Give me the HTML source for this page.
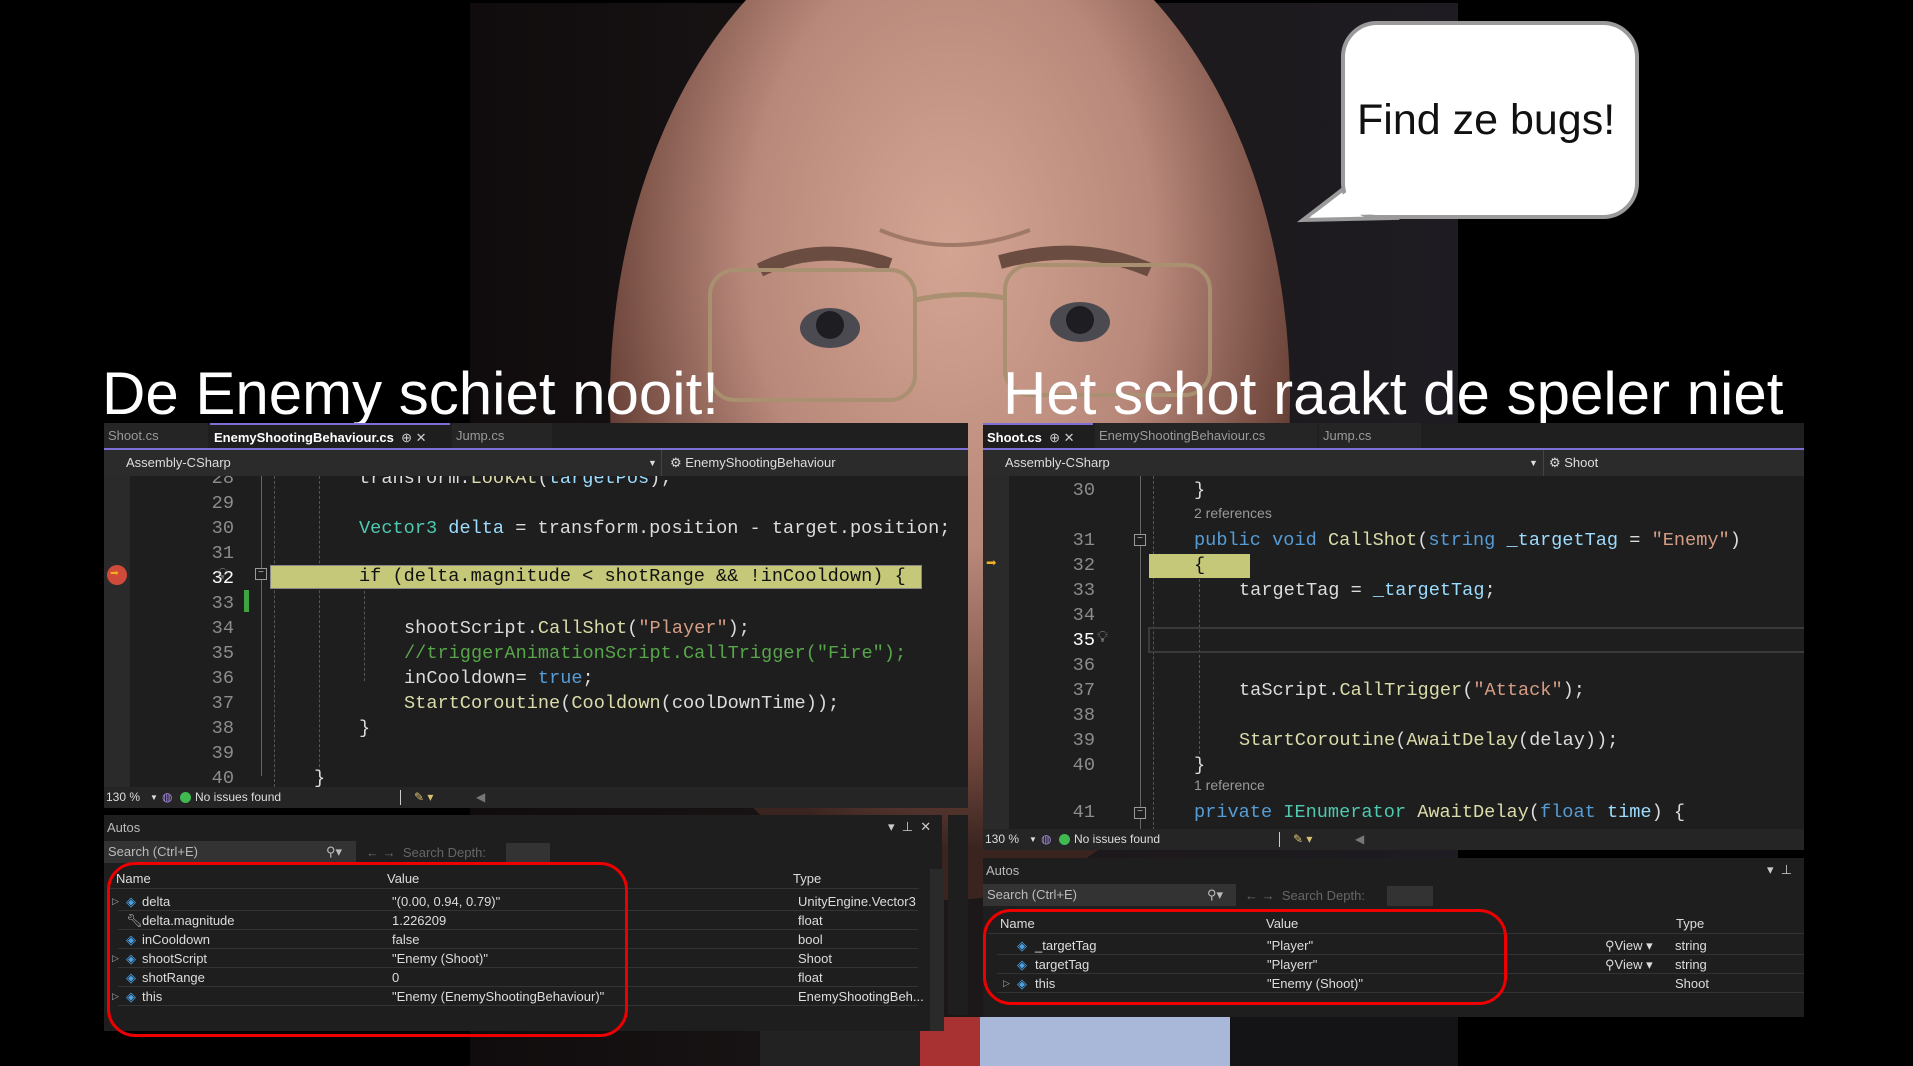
<!DOCTYPE html>
<html><head><meta charset="utf-8"><style>
*{margin:0;padding:0;box-sizing:border-box}
body{width:1913px;height:1066px;background:#000;position:relative;overflow:hidden;font-family:"Liberation Sans",sans-serif}
.abs{position:absolute}
.panel{position:absolute;background:#1e1e1e;overflow:hidden}
.tabs{position:absolute;left:0;right:0;top:0;height:27px;background:#1f1f1f;border-bottom:2px solid #7c6fd6}
.tab{position:absolute;top:0;height:25px;line-height:25px;font-size:13px;color:#9a9a9a;padding-left:4px;background:#252526}
.tab.act{color:#fff;font-weight:bold;background:#1e1e1e}
.tb{position:absolute;left:0;right:0;top:27px;height:26px;background:#2b2b2b;font-size:13px;color:#ddd;line-height:26px}
.code{position:absolute;left:0;right:0;top:53px;font-family:"Liberation Mono",monospace;font-size:18.6px;color:#dcdcdc;overflow:hidden}
.ln{position:absolute;text-align:right;width:40px;color:#8c8c8c;font-family:"Liberation Mono",monospace;font-size:18.6px}
.l{position:absolute;white-space:pre;line-height:25px}
.k{color:#569cd6}.t{color:#4ec9b0}.m{color:#dcdcaa}.s{color:#d69d85}.c{color:#57a64a}.v{color:#9cdcfe}
.ref{position:absolute;font-family:"Liberation Sans",sans-serif;font-size:14px;color:#999}
.gd{position:absolute;width:0;border-left:1px dashed #555}
.status{position:absolute;left:0;right:0;height:21px;background:#252526;font-size:12px;color:#ddd;line-height:21px}
.autos{position:absolute;background:#1e1e1e;font-size:13px;color:#ddd}
.row{position:absolute;left:14px;height:19px;line-height:19px;border-bottom:1px solid #333;white-space:nowrap}
.red{position:absolute;border:3px solid #e00;border-radius:28px}
.ttl{position:absolute;color:#fff;font-size:60px;white-space:nowrap;top:359px}
</style></head><body>

<svg class="abs" style="left:0;top:0" width="1913" height="1066">
<defs>
<radialGradient id="sk" cx="50%" cy="35%" r="60%">
<stop offset="0" stop-color="#d4a493"/><stop offset="0.5" stop-color="#b8887a"/><stop offset="0.85" stop-color="#6e463c"/><stop offset="1" stop-color="#3a2420"/></radialGradient>
<linearGradient id="bg" x1="0" x2="1"><stop offset="0" stop-color="#100c0d"/><stop offset="0.5" stop-color="#1c1718"/><stop offset="1" stop-color="#1e1c22"/></linearGradient>
</defs>
<rect x="470" y="3" width="988" height="1063" fill="url(#bg)"/>
<ellipse cx="950" cy="400" rx="340" ry="500" fill="url(#sk)"/>
<path d="M880 230 Q950 260 1030 230" stroke="#a07868" stroke-width="4" fill="none"/>
<path d="M760 270 Q820 240 890 265 M1000 262 Q1080 240 1150 270" stroke="#6a4c40" stroke-width="14" fill="none"/>
<rect x="710" y="270" width="205" height="130" rx="25" fill="none" stroke="#a89070" stroke-width="4"/>
<rect x="1005" y="265" width="205" height="130" rx="25" fill="none" stroke="#a89070" stroke-width="4"/>
<path d="M915 300 Q960 290 1005 298" stroke="#a89070" stroke-width="5" fill="none"/>
<ellipse cx="830" cy="328" rx="30" ry="20" fill="#4a4a50"/><circle cx="830" cy="325" r="14" fill="#1d1d22"/>
<ellipse cx="1080" cy="322" rx="30" ry="20" fill="#4a4a50"/><circle cx="1080" cy="320" r="14" fill="#1d1d22"/>
<rect x="980" y="1017" width="250" height="49" fill="#a9b8d8"/>
<rect x="1230" y="1017" width="228" height="49" fill="#141417"/>
<rect x="920" y="1017" width="60" height="49" fill="#a83232"/>
<rect x="760" y="1031" width="160" height="35" fill="#222"/>
</svg>

<svg class="abs" style="left:1295px;top:15px" width="360" height="215">
<polygon points="60,165 8,205 100,203" fill="#fff" stroke="#9a9a9a" stroke-width="4"/>
<rect x="48" y="8" width="294" height="194" rx="34" fill="#fff" stroke="#9a9a9a" stroke-width="4"/>
<polygon points="62,170 16,201 100,199" fill="#fff"/>
</svg>
<div class="abs" style="left:1357px;top:96px;font-size:43px;color:#111">Find ze bugs!</div>

<div class="ttl" style="left:102px">De Enemy schiet nooit!</div>
<div class="ttl" style="left:1003px">Het schot raakt de speler niet</div>

<!-- LEFT PANEL -->
<div class="panel" style="left:104px;top:423px;width:864px;height:385px">
 <div class="tabs">
  <div class="tab" style="left:0;width:104px">Shoot.cs</div>
  <div class="tab act" style="left:106px;width:240px;border-top:2px solid #7c6fd6">EnemyShootingBehaviour.cs &nbsp;<span style="font-weight:normal;color:#ccc">⊕ ✕</span></div>
  <div class="tab" style="left:348px;width:100px">Jump.cs</div>
 </div>
 <div class="tb"><span style="margin-left:22px">Assembly-CSharp</span>
  <span class="abs" style="left:544px;font-size:9px">▼</span>
  <span class="abs" style="left:557px;width:1px;height:26px;background:#444"></span>
  <span class="abs" style="left:566px">⚙ EnemyShootingBehaviour</span></div>
 <div class="code" style="height:311px">
  <div class="abs" style="left:0;top:0;width:26px;height:311px;background:#2a2a2a"></div>
  <div class="abs" style="left:3px;top:89px;width:20px;height:20px;border-radius:50%;background:#d04a3a"></div>
  <div class="abs" style="left:6px;top:92px;color:#f0b020;font-size:15px;line-height:14px">➡</div>
  <div class="ln" style="left:90px;top:-10px;line-height:25px">28<br>29<br>30<br>31<br><span style="color:#fff">32</span><br>33<br>34<br>35<br>36<br>37<br>38<br>39<br>40</div>
  <div class="abs" style="left:113px;top:90px;color:#999;font-size:16px">💡︎</div>
  <div class="abs" style="left:140px;top:114px;width:5px;height:22px;background:#3fa33f"></div>
  <div class="abs" style="left:157px;top:0;width:1px;height:300px;background:#666"></div>
  <div class="abs" style="left:151px;top:92px;width:12px;height:12px;border:1px solid #999;background:#1e1e1e;font-size:10px;line-height:9px;text-align:center;color:#bbb">−</div>
  <div class="gd" style="left:170px;top:0;height:311px"></div>
  <div class="gd" style="left:215px;top:0;height:311px"></div>
  <div class="gd" style="left:260px;top:115px;height:90px"></div>
  <div class="abs" style="left:166px;top:89px;width:652px;height:24px;background:#c4c878;border:1px solid #888"></div>
  <div class="l" style="left:255px;top:-10px">transform.<span class="m">LookAt</span>(<span class="v">targetPos</span>);</div>
  <div class="l" style="left:255px;top:40px"><span class="t">Vector3</span> <span class="v">delta</span> = transform.position - target.position;</div>
  <div class="l" style="left:255px;top:88px;color:#111">if (delta.magnitude &lt; shotRange &amp;&amp; !inCooldown) {</div>
  <div class="l" style="left:300px;top:140px">shootScript.<span class="m">CallShot</span>(<span class="s">"Player"</span>);</div>
  <div class="l c" style="left:300px;top:165px">//triggerAnimationScript.CallTrigger("Fire");</div>
  <div class="l" style="left:300px;top:190px">inCooldown= <span class="k">true</span>;</div>
  <div class="l" style="left:300px;top:215px"><span class="m">StartCoroutine</span>(<span class="m">Cooldown</span>(coolDownTime));</div>
  <div class="l" style="left:255px;top:240px">}</div>
  <div class="l" style="left:210px;top:290px">}</div>
 </div>
 <div class="status" style="top:364px">
  <span class="abs" style="left:2px">130 %</span><span class="abs" style="left:46px;font-size:8px">▼</span>
  <span class="abs" style="left:58px;color:#a58be0">◍</span>
  <span class="abs" style="left:76px;top:5px;width:11px;height:11px;border-radius:50%;background:#3fb950"></span>
  <span class="abs" style="left:91px">No issues found</span>
  <span class="abs" style="left:296px;top:3px;width:1px;height:15px;background:#ccc"></span>
  <span class="abs" style="left:310px;color:#d8c070">✎ ▾</span>
  <span class="abs" style="left:372px;color:#777">◀</span>
 </div>
</div>

<!-- LEFT AUTOS -->
<div class="autos" style="left:104px;top:815px;width:838px;height:216px">
 <div class="abs" style="left:3px;top:5px;color:#bbb">Autos</div>
 <div class="abs" style="left:784px;top:4px;color:#ccc">▾ &nbsp;⊥ &nbsp;✕</div>
 <div class="abs" style="left:0;top:26px;width:252px;height:22px;background:#333;color:#bbb;line-height:22px;padding-left:4px">Search (Ctrl+E)<span class="abs" style="left:222px">⚲▾</span></div>
 <div class="abs" style="left:262px;top:30px;color:#666">← → &nbsp;Search Depth:</div>
 <div class="abs" style="left:402px;top:28px;width:44px;height:20px;background:#333"></div>
 <div class="abs" style="left:5px;top:54px;width:810px;height:20px;border-bottom:1px solid #333;line-height:20px">
  <span class="abs" style="left:7px">Name</span><span class="abs" style="left:278px">Value</span><span class="abs" style="left:684px">Type</span></div>
 <div class="abs" style="left:826px;top:54px;width:14px;height:162px;background:#2a2a2a"></div>
 <div class="row" style="top:77px;width:800px"><span class="abs" style="left:-6px;font-size:9px;color:#aaa">▷</span><span class="abs" style="left:8px;color:#4aa0e0">◈</span><span class="abs" style="left:24px">delta</span><span class="abs" style="left:274px">"(0.00, 0.94, 0.79)"</span><span class="abs" style="left:680px">UnityEngine.Vector3</span></div>
 <div class="row" style="top:96px;width:800px"><span class="abs" style="left:8px;color:#bbb">🔧︎</span><span class="abs" style="left:24px">delta.magnitude</span><span class="abs" style="left:274px">1.226209</span><span class="abs" style="left:680px">float</span></div>
 <div class="row" style="top:115px;width:800px"><span class="abs" style="left:8px;color:#4aa0e0">◈</span><span class="abs" style="left:24px">inCooldown</span><span class="abs" style="left:274px">false</span><span class="abs" style="left:680px">bool</span></div>
 <div class="row" style="top:134px;width:800px"><span class="abs" style="left:-6px;font-size:9px;color:#aaa">▷</span><span class="abs" style="left:8px;color:#4aa0e0">◈</span><span class="abs" style="left:24px">shootScript</span><span class="abs" style="left:274px">"Enemy (Shoot)"</span><span class="abs" style="left:680px">Shoot</span></div>
 <div class="row" style="top:153px;width:800px"><span class="abs" style="left:8px;color:#4aa0e0">◈</span><span class="abs" style="left:24px">shotRange</span><span class="abs" style="left:274px">0</span><span class="abs" style="left:680px">float</span></div>
 <div class="row" style="top:172px;width:800px"><span class="abs" style="left:-6px;font-size:9px;color:#aaa">▷</span><span class="abs" style="left:8px;color:#4aa0e0">◈</span><span class="abs" style="left:24px">this</span><span class="abs" style="left:274px">"Enemy (EnemyShootingBehaviour)"</span><span class="abs" style="left:680px">EnemyShootingBeh...</span></div>
</div>
<div class="abs" style="left:948px;top:815px;width:20px;height:200px;background:#1e1e1e"></div>
<div class="red" style="left:107px;top:862px;width:521px;height:175px"></div>

<!-- RIGHT PANEL -->
<div class="panel" style="left:983px;top:423px;width:821px;height:427px">
 <div class="tabs">
  <div class="tab act" style="left:0;width:110px;border-top:2px solid #7c6fd6">Shoot.cs &nbsp;<span style="font-weight:normal;color:#ccc">⊕ ✕</span></div>
  <div class="tab" style="left:112px;width:222px">EnemyShootingBehaviour.cs</div>
  <div class="tab" style="left:336px;width:102px">Jump.cs</div>
 </div>
 <div class="tb"><span style="margin-left:22px">Assembly-CSharp</span>
  <span class="abs" style="left:546px;font-size:9px">▼</span>
  <span class="abs" style="left:560px;width:1px;height:26px;background:#444"></span>
  <span class="abs" style="left:566px">⚙ Shoot</span></div>
 <div class="code" style="height:354px">
  <div class="abs" style="left:0;top:0;width:26px;height:354px;background:#2a2a2a"></div>
  <div class="abs" style="left:3px;top:77px;color:#f0b020;font-size:18px">➡</div>
  <div class="ln" style="left:72px;top:2px;line-height:25px">30</div>
  <div class="ln" style="left:72px;top:52px;line-height:25px">31<br>32<br>33<br>34<br><span style="color:#fff">35</span><br>36<br>37<br>38<br>39<br>40</div>
  <div class="ln" style="left:72px;top:324px;line-height:25px">41</div>
  <div class="abs" style="left:114px;top:153px;color:#999;font-size:16px">💡︎</div>
  <div class="abs" style="left:157px;top:0;width:1px;height:354px;background:#666"></div>
  <div class="abs" style="left:151px;top:58px;width:12px;height:12px;border:1px solid #999;background:#1e1e1e;font-size:10px;line-height:9px;text-align:center;color:#bbb">−</div>
  <div class="abs" style="left:151px;top:331px;width:12px;height:12px;border:1px solid #999;background:#1e1e1e;font-size:10px;line-height:9px;text-align:center;color:#bbb">−</div>
  <div class="gd" style="left:170px;top:0;height:354px"></div>
  <div class="gd" style="left:216px;top:98px;height:180px"></div>
  <div class="abs" style="left:165px;top:151px;width:660px;height:26px;border:2px solid #3a3a3a"></div>
  <div class="abs" style="left:166px;top:78px;width:101px;height:24px;background:#c4c878"></div>
  <div class="l" style="left:211px;top:2px">}</div>
  <div class="ref" style="left:211px;top:29px">2 references</div>
  <div class="l" style="left:211px;top:52px"><span class="k">public</span> <span class="k">void</span> <span class="m">CallShot</span>(<span class="k">string</span> <span class="v">_targetTag</span> = <span class="s">"Enemy"</span>)</div>
  <div class="l" style="left:211px;top:77px;color:#111">{</div>
  <div class="l" style="left:256px;top:102px">targetTag = <span class="v">_targetTag</span>;</div>
  <div class="l" style="left:256px;top:202px">taScript.<span class="m">CallTrigger</span>(<span class="s">"Attack"</span>);</div>
  <div class="l" style="left:256px;top:252px"><span class="m">StartCoroutine</span>(<span class="m">AwaitDelay</span>(delay));</div>
  <div class="l" style="left:211px;top:277px">}</div>
  <div class="ref" style="left:211px;top:301px">1 reference</div>
  <div class="l" style="left:211px;top:324px"><span class="k">private</span> <span class="t">IEnumerator</span> <span class="m">AwaitDelay</span>(<span class="k">float</span> <span class="v">time</span>) {</div>
 </div>
 <div class="status" style="top:406px">
  <span class="abs" style="left:2px">130 %</span><span class="abs" style="left:46px;font-size:8px">▼</span>
  <span class="abs" style="left:58px;color:#a58be0">◍</span>
  <span class="abs" style="left:76px;top:5px;width:11px;height:11px;border-radius:50%;background:#3fb950"></span>
  <span class="abs" style="left:91px">No issues found</span>
  <span class="abs" style="left:296px;top:3px;width:1px;height:15px;background:#ccc"></span>
  <span class="abs" style="left:310px;color:#d8c070">✎ ▾</span>
  <span class="abs" style="left:372px;color:#777">◀</span>
 </div>
</div>

<!-- RIGHT AUTOS -->
<div class="autos" style="left:983px;top:858px;width:821px;height:159px">
 <div class="abs" style="left:3px;top:5px;color:#bbb">Autos</div>
 <div class="abs" style="left:784px;top:4px;color:#ccc">▾ &nbsp;⊥</div>
 <div class="abs" style="left:0;top:26px;width:253px;height:22px;background:#333;color:#bbb;line-height:22px;padding-left:4px">Search (Ctrl+E)<span class="abs" style="left:224px">⚲▾</span></div>
 <div class="abs" style="left:262px;top:30px;color:#666">← → &nbsp;Search Depth:</div>
 <div class="abs" style="left:404px;top:28px;width:46px;height:20px;background:#333"></div>
 <div class="abs" style="left:5px;top:56px;width:816px;height:20px;border-bottom:1px solid #333;line-height:20px">
  <span class="abs" style="left:12px">Name</span><span class="abs" style="left:278px">Value</span><span class="abs" style="left:688px">Type</span></div>
 <div class="row" style="top:78px;width:807px"><span class="abs" style="left:20px;color:#4aa0e0">◈</span><span class="abs" style="left:38px">_targetTag</span><span class="abs" style="left:270px">"Player"</span><span class="abs" style="left:608px">⚲View ▾</span><span class="abs" style="left:678px">string</span></div>
 <div class="row" style="top:97px;width:807px"><span class="abs" style="left:20px;color:#4aa0e0">◈</span><span class="abs" style="left:38px">targetTag</span><span class="abs" style="left:270px">"Playerr"</span><span class="abs" style="left:608px">⚲View ▾</span><span class="abs" style="left:678px">string</span></div>
 <div class="row" style="top:116px;width:807px"><span class="abs" style="left:6px;font-size:9px;color:#aaa">▷</span><span class="abs" style="left:20px;color:#4aa0e0">◈</span><span class="abs" style="left:38px">this</span><span class="abs" style="left:270px">"Enemy (Shoot)"</span><span class="abs" style="left:678px">Shoot</span></div>
</div>
<div class="red" style="left:983px;top:909px;width:524px;height:96px"></div>

</body></html>
